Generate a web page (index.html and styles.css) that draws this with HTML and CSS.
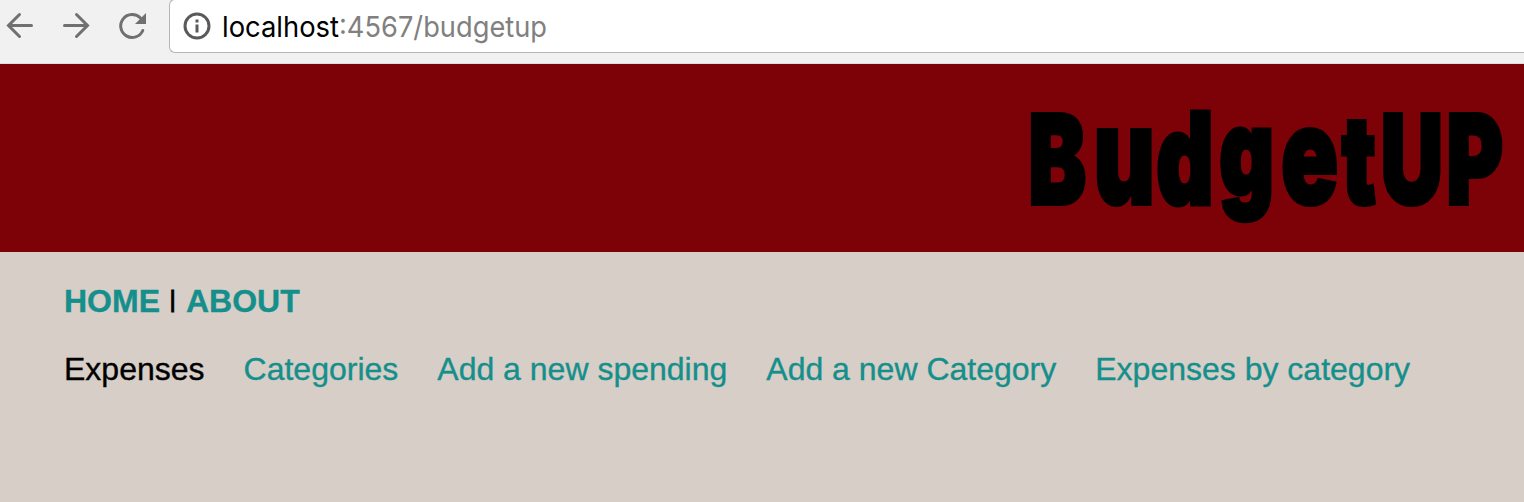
FILE: index.html
```html
<!DOCTYPE html>
<html lang="en">
<head>
<meta charset="utf-8">
<title>BudgetUP</title>
<link rel="stylesheet" href="styles.css">
</head>
<body>
<div class="toolbar">
  <svg class="nav-icons" width="169" height="63" viewBox="0 0 169 63" fill="none" stroke="#707070" stroke-width="3" stroke-linecap="round">
    <path d="M31.500 25.500H9M19.500 14.500L8.500 25.500L19.500 36.500"/>
    <path d="M64.500 25.500H87M76.500 14.500L87.500 25.500L76.500 36.500"/>
    <path d="M140.500 18A11.500 11.500 0 1 0 142.800 30.500"/>
    <path d="M146 13V24H135Z" fill="#707070" stroke="none"/>
  </svg>
  <div class="address">
    <svg class="info" width="28" height="28" viewBox="0 0 28 28"><circle cx="14" cy="14" r="12" fill="none" stroke="#5a5a5a" stroke-width="3"/><path d="M12.500 12.500h3v8h-3zM12.500 7.500h3v3h-3z" fill="#5a5a5a"/></svg>
    <svg class="url" width="330" height="48"><text x="0" y="36" textLength="117" lengthAdjust="spacingAndGlyphs" fill="#000">localhost</text><text x="117" y="36" textLength="208" lengthAdjust="spacingAndGlyphs" fill="#808080">:4567/budgetup</text></svg>
  </div>
</div>
<header class="banner">
  <svg class="logo" width="494" height="150"><text transform="scale(.7 1)" y="109"><tspan x="20.500">B</tspan><tspan class="low" x="113.500">u</tspan><tspan class="dee" x="203.500">d</tspan><tspan class="gee" x="293.500" y="100">g</tspan><tspan class="low" x="381.500" y="109">e</tspan><tspan class="tall" x="468">t</tspan><tspan x="523.500">U</tspan><tspan x="617.500">P</tspan></text></svg>
</header>
<main>
  <nav class="primary"><a class="home">HOME</a><span class="bar">|</span><a class="about">ABOUT</a></nav>
  <nav class="secondary"><span class="expenses">Expenses</span><a>Categories</a><a>Add a new spending</a><a>Add a new Category</a><a>Expenses by category</a></nav>
</main>
</body>
</html>
```
FILE: styles.css
```css
body { margin: 0; height: 502px; overflow: hidden; background: #d7cec7; font-family: "Liberation Sans", Arial, sans-serif; }
.toolbar { box-sizing: border-box; display: flex; height: 64px; background: #f1f1f1; border-bottom: 1px solid #ddd; }
.nav-icons { flex: none; }
.address { box-sizing: border-box; display: flex; flex: 1; height: 54px; margin-top: -1px; padding: 1px 0 0 13px; border: 1px solid #b5b5b5; border-right: 0; border-radius: 6px 0 0 6px; background: #fff; }
.info { margin-top: 11px; }
.url { overflow: visible; margin-left: 11px; font: 29px Inter, sans-serif; }
.banner { display: flex; justify-content: flex-end; height: 188px; background: #7c0207; }
.logo { overflow: visible; margin: 31px 16px 0 0; font: 900 124px Inter, sans-serif; stroke: #000; stroke-width: 4px; }
.low { font-size: 135px; }
.tall { font-size: 123px; }
.dee { font-size: 126px; stroke-width: 5px; }
.gee { font-size: 120px; stroke-width: 5px; }
main { padding: 29px 0 0 64px; color: #000; font-size: 32px; line-height: 40px; }
nav { display: flex; white-space: nowrap; -webkit-text-stroke: .35px; }
nav a { color: #158f8c; }
.primary a { font-weight: bold; }
.bar { width: 9px; margin: 0 9px 0 8px; line-height: 36px; font-size: 24px; text-align: center; -webkit-text-stroke: 1px; }
.secondary { gap: 39px; margin-top: 28px; }
```
